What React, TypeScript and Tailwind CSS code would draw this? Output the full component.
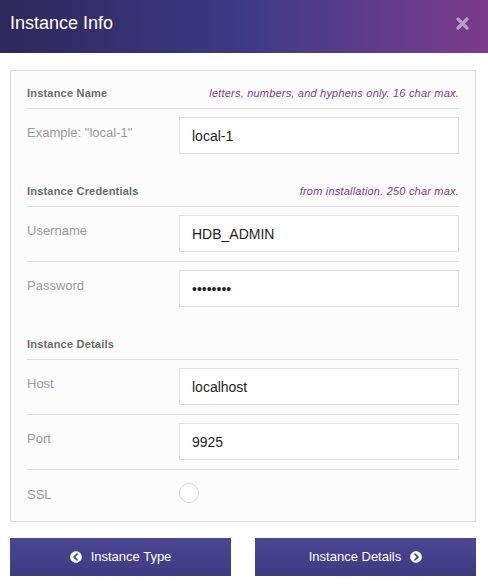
import React from 'react';
import { FaChevronCircleLeft, FaChevronCircleRight } from 'react-icons/fa';

const font = { fontFamily: '"Liberation Sans", Arial, Helvetica, sans-serif' };

function SectionHeader({ title, hint, first }: { title: string; hint?: string; first?: boolean }) {
  return (
    <div className={`flex items-center justify-between border-b border-[#dedede] pb-[8px] ${first ? '' : 'mt-[21px]'}`}>
      <span className="text-[11px] font-bold text-[#6b6b6b] leading-[14px] tracking-[0.2px]">{title}</span>
      {hint && <span className="text-[11px] italic text-[#7d3a8f] leading-[14px] tracking-[0.2px]">{hint}</span>}
    </div>
  );
}

function Field({ label, value, type = 'text', last }: { label: string; value: string; type?: string; last?: boolean }) {
  return (
    <div className={`flex items-start pt-[8px] pb-[9px] ${last ? '' : 'border-b border-[#dedede]'}`}>
      <div className="w-[152px] shrink-0 pt-[8px] text-[13px] leading-[15px] text-[#9a9a9a]">{label}</div>
      <input
        readOnly
        type={type}
        value={value}
        className="h-[37px] w-[280px] border border-[#e0e0e0] bg-white px-[12px] text-[14px] text-[#1f1f1f] outline-none"
        style={font}
      />
    </div>
  );
}

export default function App() {
  return (
    <div className="w-[488px] h-[588px] bg-white" style={font}>
      {/* header */}
      <div className="h-[53px] flex items-start justify-between pl-[10px] pr-[19px] pt-[13px] bg-gradient-to-r from-[#2f285a] via-[#3d3a86] to-[#7a3b8b]">
        <h1 className="text-[18px] text-white leading-[20px]">Instance Info</h1>
        <svg width="13" height="13" viewBox="0 0 13 13" className="mt-[4px] text-[#b99ad0]">
          <path d="M2 2 L11 11 M11 2 L2 11" stroke="currentColor" strokeWidth="3.2" strokeLinecap="round" />
        </svg>
      </div>

      {/* form card */}
      <div className="ml-[10px] w-[466px] mt-[17px] border border-[#dcdcdc] bg-[#fcfcfc] px-[16px] pt-[15px] pb-[8px]">
        <SectionHeader first title="Instance Name" hint="letters, numbers, and hyphens only. 16 char max." />
        <Field label='Example: "local-1"' value="local-1" last />

        <SectionHeader title="Instance Credentials" hint="from installation. 250 char max." />
        <Field label="Username" value="HDB_ADMIN" />
        <Field label="Password" value="password" type="password" last />

        <SectionHeader title="Instance Details" />
        <Field label="Host" value="localhost" />
        <Field label="Port" value="9925" />
        <div className="flex items-start pt-[9px] h-[43px]">
          <div className="w-[152px] shrink-0 pt-[8px] text-[13px] leading-[15px] text-[#9a9a9a]">SSL</div>
          <div className="mt-[4px] w-[20px] h-[20px] rounded-full border border-[#dadada] bg-white" />
        </div>
      </div>

      {/* buttons */}
      <div className="ml-[10px] w-[466px] mt-[16px] flex justify-between">
        <button className="w-[221px] h-[38px] flex items-center justify-center gap-[9px] bg-gradient-to-b from-[#4c4792] to-[#3e3983] text-white text-[13px]">
          <FaChevronCircleLeft className="w-[12px] h-[12px]" />
          <span>Instance Type</span>
        </button>
        <button className="w-[221px] h-[38px] flex items-center justify-center gap-[9px] bg-gradient-to-b from-[#4c4792] to-[#3e3983] text-white text-[13px]">
          <span>Instance Details</span>
          <FaChevronCircleRight className="w-[12px] h-[12px]" />
        </button>
      </div>
    </div>
  );
}
